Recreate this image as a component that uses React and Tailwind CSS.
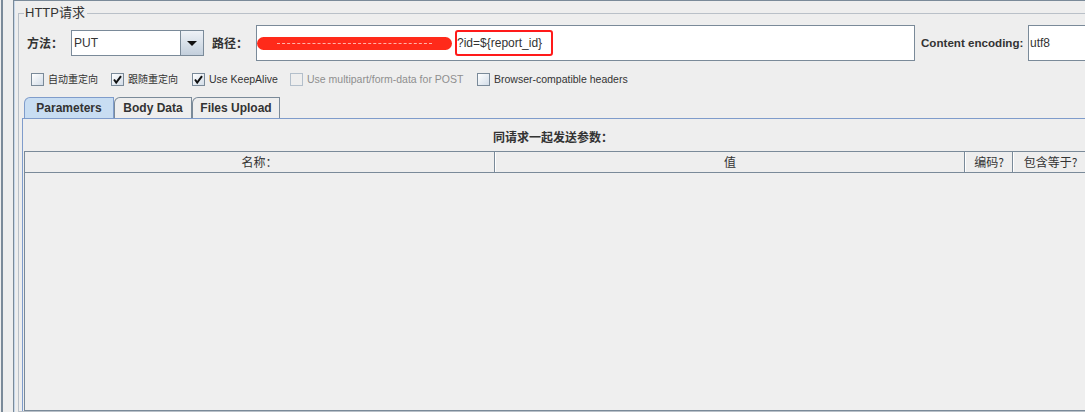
import React from "react";

function CheckBox({ checked, disabled }) {
  return (
    <span
      className={
        disabled
          ? "flex h-[13px] w-[13px] shrink-0 items-center justify-center border border-[#b3bfcb] bg-[#eeeeee]"
          : "flex h-[13px] w-[13px] shrink-0 items-center justify-center border border-[#7a8a99] bg-gradient-to-br from-[#ffffff] to-[#d3dde8]"
      }
    >
      {checked && (
        <svg width="11" height="11" viewBox="0 0 11 11">
          <path d="M2 5.5 L4.2 8.5 L9 2.2" fill="none" stroke="#111111" strokeWidth="2" />
        </svg>
      )}
    </span>
  );
}

function Option({ label, checked, disabled, width, cjk }) {
  const size = cjk ? "text-[10px]" : "text-[10.5px]";
  return (
    <div className={`flex shrink-0 items-center gap-[4px] ${width}`}>
      <CheckBox checked={checked} disabled={disabled} />
      <span
        className={
          disabled
            ? `whitespace-nowrap leading-[13px] text-[#8e8e8e] ${size}`
            : `whitespace-nowrap leading-[13px] text-[#333333] ${size}`
        }
      >
        {label}
      </span>
    </div>
  );
}

function Tab({ label, active, width }) {
  return (
    <div
      className={
        active
          ? `flex h-[21px] shrink-0 items-center justify-center rounded-tl-[6px] border-l border-r border-t border-[#7f9ccb] bg-[#c8ddf2] text-[12px] font-bold ${width}`
          : `flex h-[21px] shrink-0 items-center justify-center rounded-tl-[6px] border-l border-r border-t border-[#7a8a99] bg-[#eeeeee] text-[12px] font-bold ${width}`
      }
    >
      {label}
    </div>
  );
}

export default function App() {
  return (
    <div className="flex h-[412px] w-[1085px] overflow-hidden bg-[#eeeeee] font-['Liberation_Sans','Noto_Sans_CJK_SC',sans-serif] text-[#333333]">
      <div className="ml-[1px] w-[2px] shrink-0 bg-[#7a8a99]" />
      <div className="ml-[10px] flex-1 overflow-hidden border-l border-t border-[#7a8a99]">
        <div className="h-full border-l border-[#c6d6e8] pl-[3px] pt-[5px]">
          <fieldset className="w-[1100px] border border-[#b9c0c8]">
            <legend className="ml-[5px] pl-[1px] pr-[2px] text-[13px] leading-[14px]">HTTP请求</legend>

            {/* method / path / encoding */}
            <div className="mt-[5px] flex h-[36px] items-center pl-[8px]">
              <span className="w-[44px] shrink-0 font-['Noto_Sans_CJK_SC',sans-serif] text-[12px] font-bold">方法：</span>
              <div className="flex h-[26px] w-[133px] shrink-0 border border-[#7a8a99] bg-white">
                <span className="flex flex-1 items-center pl-[2px] text-[12px]">PUT</span>
                <span className="flex w-[23px] items-center justify-center border-l border-[#7a8a99] bg-gradient-to-b from-[#eef2f7] to-[#c3cfdc]">
                  <svg width="10" height="5" viewBox="0 0 10 5">
                    <polygon points="0,0 10,0 5,5" fill="#111111" />
                  </svg>
                </span>
              </div>
              <span className="ml-[8px] w-[44px] shrink-0 font-['Noto_Sans_CJK_SC',sans-serif] text-[12px] font-bold">路径：</span>
              <div className="flex h-[36px] w-[659px] shrink-0 items-center border border-[#7a8a99] bg-white">
                <span className="flex h-[13px] w-[195px] shrink-0 items-center rounded-full bg-[#ff2a1a] px-[20px]">
                  <span className="w-full border-t border-dashed border-[#ffb3aa]" />
                </span>
                <span className="ml-[3px] flex h-[26px] w-[98px] shrink-0 items-center rounded-[3px] border-2 border-[#ff1a1a] text-[12px]">
                  ?id=${"{"}report_id{"}"}
                </span>
              </div>
              <span className="ml-[6px] w-[102px] shrink-0 whitespace-nowrap text-[11.6px] font-bold">Content encoding:</span>
              <div className="ml-[5px] flex h-[36px] w-[100px] shrink-0 items-center border border-[#7a8a99] bg-white pl-[1px] text-[12px]">
                utf8
              </div>
            </div>

            {/* options */}
            <div className="mt-[12px] flex h-[13px] items-center pl-[12px]">
              <Option label="自动重定向" cjk width="w-[80px]" />
              <Option label="跟随重定向" cjk checked width="w-[81px]" />
              <Option label="Use KeepAlive" checked width="w-[98px]" />
              <Option label="Use multipart/form-data for POST" disabled width="w-[187px]" />
              <Option label="Browser-compatible headers" width="w-[160px]" />
            </div>

            {/* tabs */}
            <div className="ml-[3px] mt-[11px]">
              <div className="flex pl-[2px]">
                <Tab label="Parameters" active width="w-[90px]" />
                <Tab label="Body Data" width="w-[78px]" />
                <Tab label="Files Upload" width="w-[88px]" />
              </div>
              <div className="border-l border-t border-[#7f9ccb]">
                <div className="w-[1060px] pt-[11px] text-center font-['Noto_Sans_CJK_SC',sans-serif] text-[12px] font-bold leading-[14px]">
                  同请求一起发送参数：
                </div>
                <div className="ml-[1px] mt-[7px] border-b border-l border-[#7a8a99]">
                  <div className="flex h-[22px] border-b border-t border-[#7a8a99] font-['Noto_Sans_CJK_SC',sans-serif] text-[12px]">
                    <div className="flex w-[470px] shrink-0 items-center justify-center border-r border-[#7a8a99]">名称：</div>
                    <div className="flex w-[470px] shrink-0 items-center justify-center border-l border-r border-l-white border-r-[#7a8a99]">值</div>
                    <div className="flex w-[48px] shrink-0 items-center justify-center border-l border-r border-l-white border-r-[#7a8a99]">编码?</div>
                    <div className="flex w-[74px] shrink-0 items-center justify-center border-l border-l-white">包含等于?</div>
                  </div>
                  <div className="h-[237px] bg-[#efefef]" />
                </div>
              </div>
            </div>
          </fieldset>
        </div>
      </div>
    </div>
  );
}
